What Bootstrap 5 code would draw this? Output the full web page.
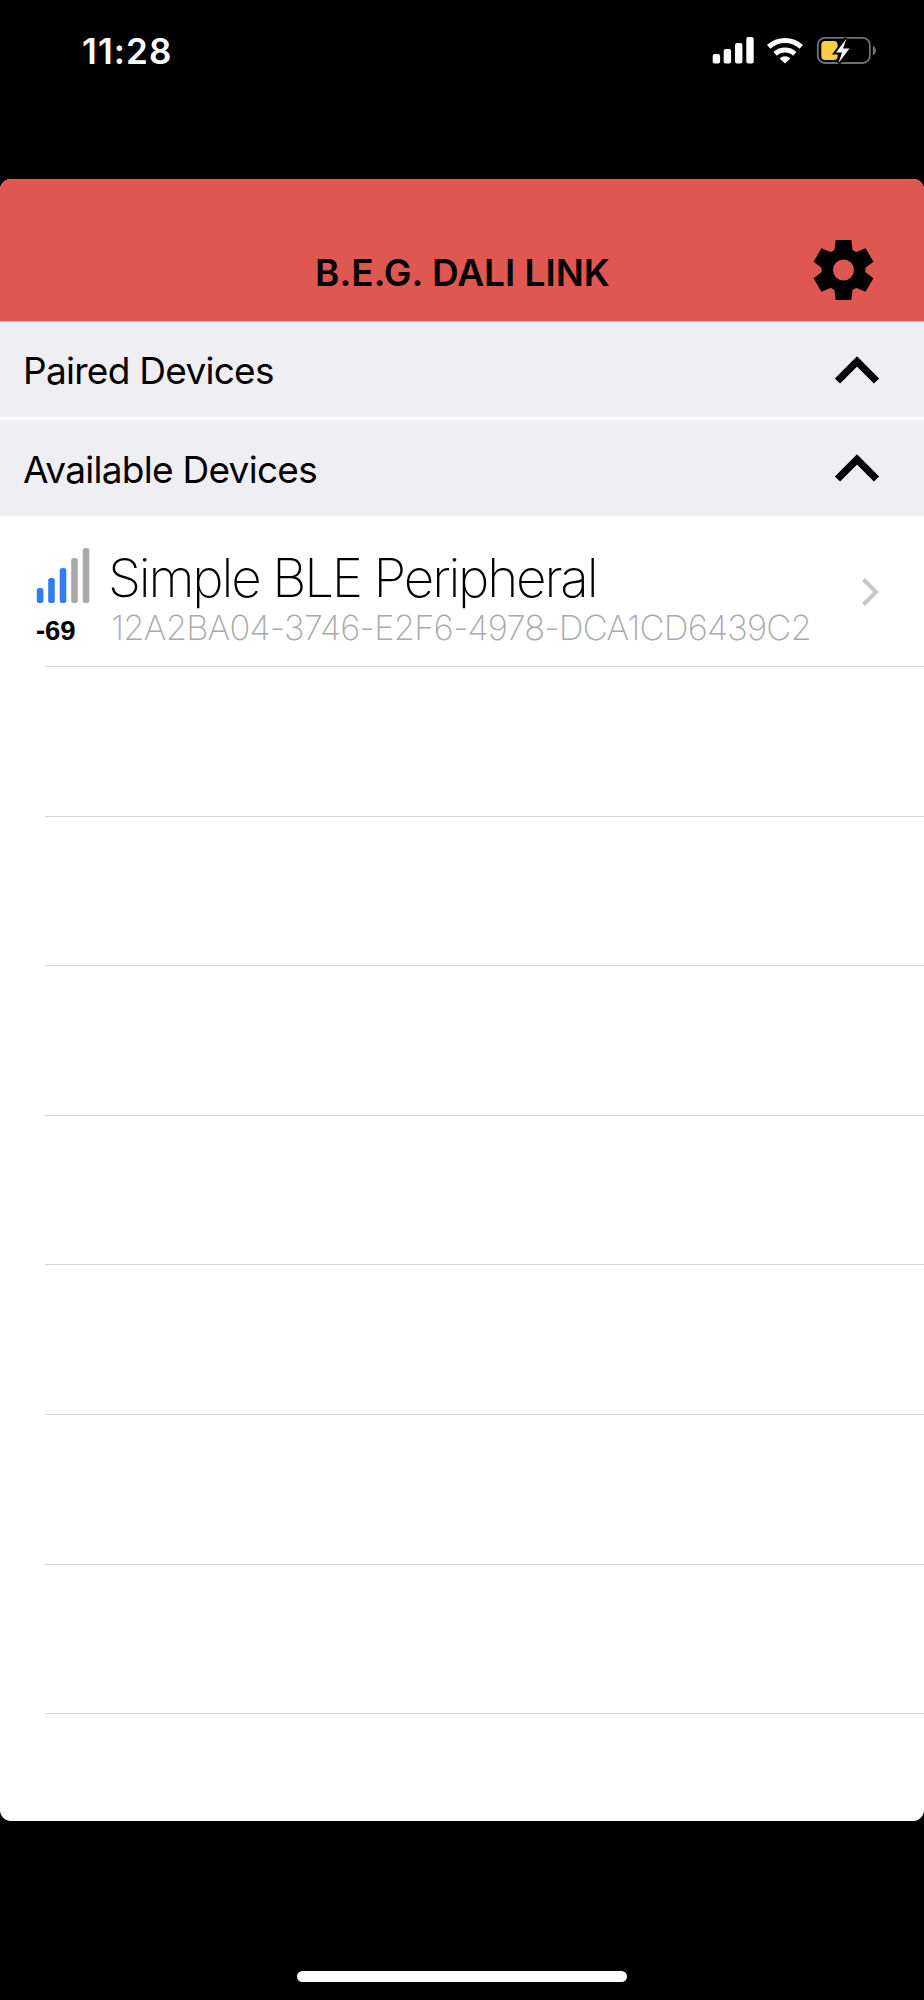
<!DOCTYPE html>
<html lang="en">
<head>
<meta charset="utf-8">
<meta name="viewport" content="width=device-width, initial-scale=1">
<title>B.E.G. DALI LINK</title>
<link href="https://cdn.jsdelivr.net/npm/bootstrap@5.3.0/dist/css/bootstrap.min.css" rel="stylesheet">
<style>
body{background:#000;color:#000;font-family:Inter,"Liberation Sans",sans-serif;height:2000px;overflow:hidden}
svg{display:block;flex:none}
.status{height:179px;padding:30px 46px 0 82px}
.status svg{margin-top:6px}
.clock{font-size:35px;line-height:42px;font-weight:600;letter-spacing:1.1px}
.sheet{height:1642px;border-radius:11px;overflow:hidden}
.app-head{height:143px;background:#de5750;border-bottom:1px solid #c9b9bd;padding-top:61px}
.title{font-size:37px;line-height:66px;font-weight:600;padding-left:1px}
.gear{right:50px;top:60px}
.section{height:95px;background:#efeef3;padding:2px 44px 0 23px;font-size:37px;letter-spacing:-.72px}
.section > span{padding-top:1px}
.section + .section{margin-top:3px;height:96px}
.device{height:150px;padding:31px 44px 0 36px}
.rssi{width:72px;font:700 27.5px/30px "Liberation Sans",sans-serif;letter-spacing:-.1px}
.rssi svg{margin-bottom:12px}
.dev-name{font-size:53px;line-height:62px;font-weight:200;letter-spacing:-2.2px}
.dev-id{font-size:34.5px;line-height:37px;font-weight:200;color:#aaa;letter-spacing:-.8px;padding-left:3px}
.next{margin-top:30px}
.line{margin-left:45px;border-top:1px solid #d6d6d8;height:149.6px}
.home{width:330px;height:11px;margin-top:150px}
</style>
</head>
<body>
<div class="status d-flex justify-content-between align-items-start">
  <div class="clock text-white">11:28</div>
  <svg width="166" height="30" viewBox="712 36 166 30">
    <g fill="#fff">
      <rect x="712.7" y="54" width="7.4" height="9.4" rx="2"/><rect x="723.7" y="49" width="7.4" height="14.4" rx="2"/><rect x="735" y="43" width="7.4" height="20.4" rx="2"/><rect x="746.3" y="37" width="7.4" height="26.4" rx="2"/>
      <path d="M785 63.6l-5.4-5.2a8.2 8.2 0 0 1 10.8 0z"/>
    </g>
    <g fill="none" stroke="#fff" stroke-width="5"><path d="M768.7 46.8a24 24 0 0 1 32.6 0"/><path d="M775.2 53.8a14.5 14.5 0 0 1 19.6 0"/></g>
    <rect x="817.8" y="37.8" width="52" height="25.2" rx="7" fill="none" stroke="#707070" stroke-width="1.8"/>
    <path d="M872.8 45.8v9.4q3.2-1.4 3.2-4.7t-3.2-4.7z" fill="#707070"/>
    <rect x="821.3" y="41" width="16.4" height="19" rx="4" fill="#f7ce46"/>
    <path d="M846.5 38.5l-10.500 14h6l-3.500 10.500 11-14.500h-6.500z" fill="#fff" stroke="#000" stroke-width="4" paint-order="stroke"/>
  </svg>
</div>
<main class="sheet bg-white">
  <header class="app-head position-relative text-center">
    <div class="title">B.E.G. DALI LINK</div>
    <svg class="gear position-absolute" width="61" height="62" viewBox="-30.5 -31 61 62">
      <defs><path id="tooth" d="M-7.8-30h15.6L9.4-17V0H-9.4v-17z"/></defs>
      <use href="#tooth"/><use href="#tooth" transform="rotate(60)"/><use href="#tooth" transform="rotate(120)"/><use href="#tooth" transform="rotate(180)"/><use href="#tooth" transform="rotate(240)"/><use href="#tooth" transform="rotate(300)"/>
      <circle r="22"/><circle r="10.5" fill="#de5750"/>
    </svg>
  </header>
  <div class="section d-flex align-items-center justify-content-between"><span>Paired Devices</span>
    <svg width="46" height="30" viewBox="0 0 46 30"><path d="M3.5 25L23 5.5 42.5 25" fill="none" stroke="#000" stroke-width="7.4"/></svg></div>
  <div class="section d-flex align-items-center justify-content-between"><span>Available Devices</span>
    <svg width="46" height="30" viewBox="0 0 46 30"><path d="M3.5 25L23 5.5 42.5 25" fill="none" stroke="#000" stroke-width="7.4"/></svg></div>
  <div class="device d-flex">
    <div class="rssi">
      <svg width="54" height="57" viewBox="0 0 54 57"><g fill="#327bf6"><rect x=".8" y="41" width="6.6" height="15" rx="2.5"/><rect x="12.2" y="31" width="6.6" height="25" rx="2.5"/><rect x="23.7" y="21" width="6.6" height="35" rx="2.5"/></g><g fill="#a9a9a9"><rect x="35.2" y="11" width="6.6" height="45" rx="2.5"/><rect x="46.7" y="1" width="6.6" height="55" rx="2.5"/></g></svg>
      -69
    </div>
    <div class="flex-grow-1 text-nowrap">
      <div class="dev-name">Simple BLE Peripheral</div>
      <div class="dev-id">12A2BA04-3746-E2F6-4978-DCA1CD6439C2</div>
    </div>
    <svg class="next" width="20" height="30" viewBox="0 0 20 30"><path d="M3.5 2.5L16 15 3.5 27.5" fill="none" stroke="#c7c7cc" stroke-width="4.2"/></svg>
  </div>
  <div class="line"></div><div class="line"></div><div class="line"></div><div class="line"></div><div class="line"></div><div class="line"></div><div class="line"></div><div class="line"></div>
</main>
<div class="home bg-white rounded-pill mx-auto"></div>
<script src="https://cdn.jsdelivr.net/npm/bootstrap@5.3.0/dist/js/bootstrap.bundle.min.js"></script>
</body>
</html>
